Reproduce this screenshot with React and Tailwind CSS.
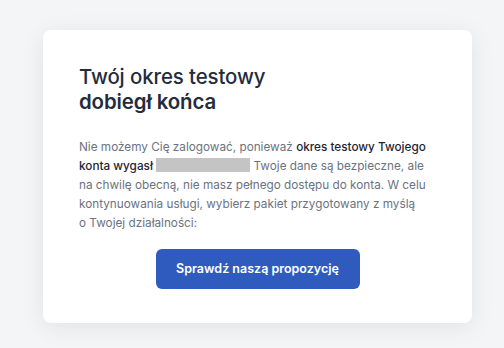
export default function App() {
  return (
    <div className="min-h-[348px] w-[504px] bg-[#f4f5f7] font-['Inter',sans-serif] pt-[30px] pl-[43px]">
      <div className="w-[429px] h-[293px] bg-white rounded-lg shadow-[0_4px_24px_rgba(0,0,0,0.08)] px-9 pt-[34px]">
        <h1 className="text-[20.4px] leading-[25px] font-medium text-[#242b3c] tracking-[-0.1px]">
          Twój okres testowy
          <br />
          <span className="font-semibold">dobiegł końca</span>
        </h1>
        <p className="mt-[24px] w-[352px] text-[11.75px] leading-[19px] text-[#6b7280]">
          Nie możemy Cię zalogować, ponieważ{' '}
          <span className="font-medium text-[#1f2433]">okres testowy Twojego konta wygasł</span>{' '}
          <span className="inline-block w-[94px] h-[14px] bg-[#c4c4c4] align-[-2px]"></span>{' '}
          Twoje dane są bezpieczne, ale na chwilę obecną, nie masz pełnego dostępu do konta. W celu kontynuowania usługi, wybierz pakiet przygotowany z{'\u00A0'}myślą o{'\u00A0'}Twojej działalności:
        </p>
        <div className="mt-[16px] flex justify-center">
          <button className="w-[204px] h-[40px] rounded-md bg-[#2f5bbf] text-white text-[12.5px] font-semibold">
            Sprawdź naszą propozycję
          </button>
        </div>
      </div>
    </div>
  )
}
